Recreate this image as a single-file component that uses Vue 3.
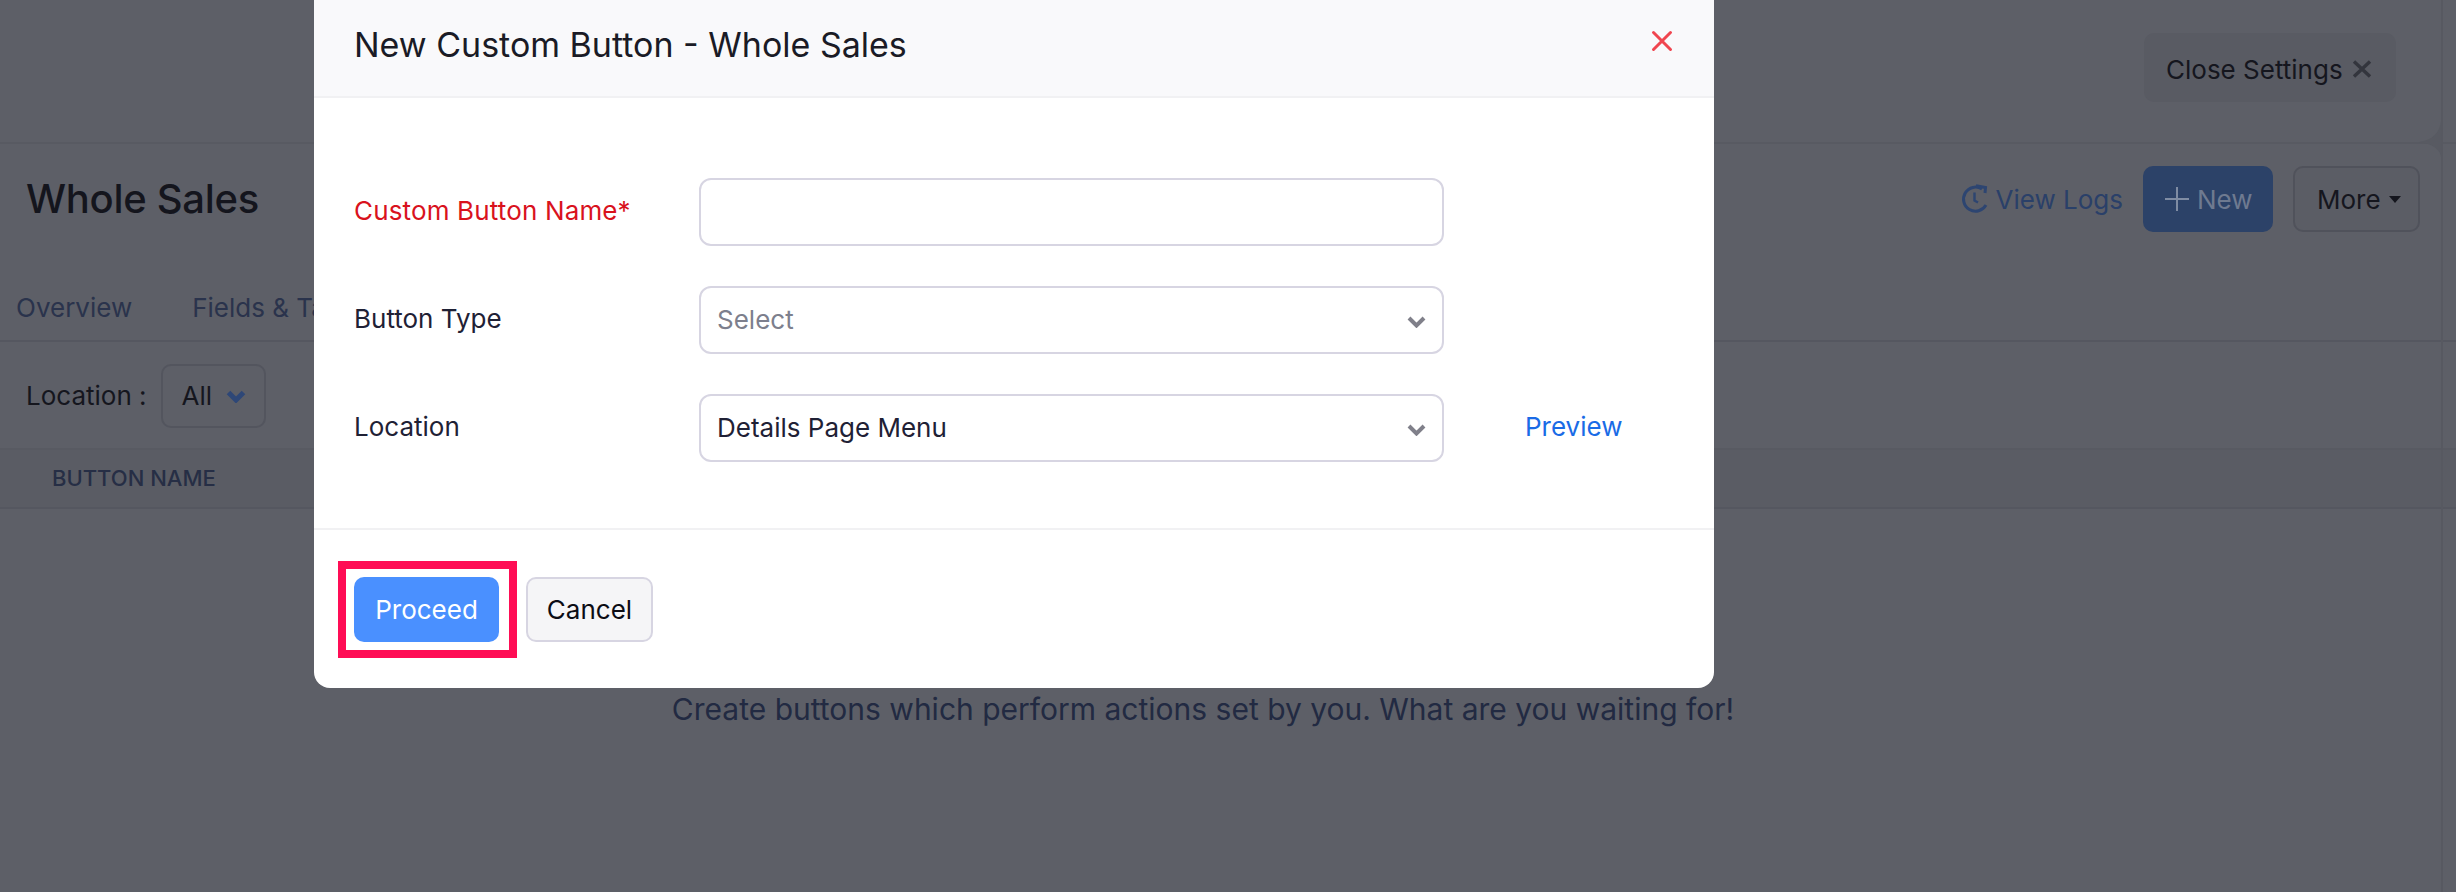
<script setup>
const rows = [
  { label: 'Custom Button Name*', required: true, type: 'input' },
  { label: 'Button Type', type: 'select', value: 'Select', placeholder: true },
  { label: 'Location', type: 'select', value: 'Details Page Menu', preview: true }
]
</script>

<template>
  <div class="page">
    <div class="topbar">
      <div class="close-settings">
        <span>Close Settings</span>
        <svg class="close-settings-x" viewBox="0 0 20 18" width="20" height="18">
          <path d="M2 1.5 18 16.5M18 1.5 2 16.5" />
        </svg>
      </div>
    </div>

    <div class="title-row">
      <h1>Whole Sales</h1>
      <div class="actions">
        <a class="logs">
          <svg viewBox="0 0 28 30" width="28" height="30">
            <path d="M21 5A12 12 0 1 0 25 21" />
            <path d="M15 1.8 24.5 3.5 24 9" />
            <path class="hands" d="M13.5 8.5v8l3.5 2" />
          </svg>
          View Logs
        </a>
        <button class="btn-new">
          <svg viewBox="0 0 24 24" width="24" height="24"><path d="M12 0v24M0 12h24" /></svg>
          New
        </button>
        <button class="btn-more">More<i class="caret"></i></button>
      </div>
    </div>

    <div class="tabs">
      <span>Overview</span>
      <span>Fields &amp; Ta</span>
    </div>

    <div class="filter">
      <span>Location :</span>
      <div class="filter-select">
        All
        <svg viewBox="0 0 20 13" width="20" height="13"><path d="M2.5 2.5 10 10l7.5-7.5" /></svg>
      </div>
    </div>

    <div class="table-head">BUTTON NAME</div>

    <p class="empty">Create buttons which perform actions set by you. What are you waiting for!</p>

    <svg class="corner" viewBox="0 0 22 36" width="22" height="36">
      <path d="M22 0Q20 18 0 21Q20 24 22 36Z" />
    </svg>

    <div class="modal">
      <header class="modal-header">
        <h2>New Custom Button - Whole Sales</h2>
        <svg class="modal-close" viewBox="0 0 24 24" width="24" height="24">
          <path d="M3.5 3.5 20.5 20.5M20.5 3.5 3.5 20.5" />
        </svg>
      </header>

      <div class="modal-body">
        <div v-for="row in rows" :key="row.label" class="form-row">
          <label :class="{ required: row.required }">{{ row.label }}</label>
          <div class="field" :class="{ placeholder: row.placeholder }">
            <span v-if="row.value">{{ row.value }}</span>
            <svg v-if="row.type === 'select'" class="chev" viewBox="0 0 19 12" width="19" height="12">
              <path d="M2 2 9.5 9.5 17 2" />
            </svg>
          </div>
          <a v-if="row.preview" class="preview">Preview</a>
        </div>
      </div>

      <footer class="modal-footer">
        <button class="btn-proceed">Proceed</button>
        <button class="btn-cancel">Cancel</button>
        <div class="highlight"></div>
      </footer>
    </div>
  </div>
</template>

<style>
html, body {
  margin: 0;
  background: #5d5f67;
}
</style>

<style scoped>
.page {
  position: relative;
  width: 2456px;
  height: 892px;
  overflow: hidden;
  background: #5d5f67;
  font-family: Inter, "Liberation Sans", sans-serif;
  font-size: 26px;
  color: #15161e;
}

.page::after {
  content: '';
  position: absolute;
  top: 0;
  bottom: 0;
  left: 2441px;
  width: 2px;
  background: #575961;
}

.corner {
  position: absolute;
  left: 2419px;
  top: 121px;
  fill: #585a62;
}

.topbar {
  height: 144px;
  box-sizing: border-box;
  padding: 33px 60px 0 0;
  display: flex;
  justify-content: flex-end;
  border-bottom: 2px solid #585a62;
}

.close-settings {
  width: 252px;
  height: 69px;
  box-sizing: border-box;
  padding: 3px 0 0 22px;
  display: flex;
  align-items: center;
  gap: 9px;
  background: #595b63;
  border-radius: 10px;
}

.close-settings-x {
  fill: none;
  stroke: #33353d;
  stroke-width: 3.4;
}

.title-row {
  height: 120px;
  box-sizing: border-box;
  padding: 22px 36px 0 26px;
  display: flex;
  justify-content: space-between;
  align-items: flex-start;
}

h1 {
  margin: 9px 0 0;
  font-size: 40px;
  font-weight: 550;
  letter-spacing: -0.3px;
  line-height: 48px;
  color: #14151d;
}

.actions {
  display: flex;
  align-items: center;
  height: 66px;
}

.logs {
  display: flex;
  align-items: center;
  gap: 7px;
  margin-right: 20px;
  color: #2a4069;
}

.logs svg {
  fill: none;
  stroke: #2d4571;
  stroke-width: 3;
}

.logs .hands {
  stroke-width: 2.4;
}

.btn-new,
.btn-more {
  height: 66px;
  box-sizing: border-box;
  font: inherit;
  display: flex;
  align-items: center;
  border-radius: 10px;
}

.btn-new {
  width: 130px;
  padding: 0 0 0 22px;
  gap: 8px;
  margin-right: 20px;
  background: #2c4268;
  border: none;
  color: #6f7a90;
}

.btn-new svg {
  fill: none;
  stroke: #7f8ca3;
  stroke-width: 2;
}

.btn-more {
  width: 127px;
  padding: 0 0 0 22px;
  background: #5b5d65;
  border: 2px solid #50525b;
  color: #15161e;
}

.caret {
  width: 0;
  height: 0;
  margin-left: 8px;
  border-left: 6.5px solid transparent;
  border-right: 6.5px solid transparent;
  border-top: 7px solid #15161e;
}

.tabs {
  height: 78px;
  box-sizing: border-box;
  padding: 10px 0 0 16px;
  display: flex;
  align-items: center;
  gap: 60px;
  border-bottom: 2px solid #555760;
  color: #2a334c;
}

.filter {
  height: 108px;
  box-sizing: border-box;
  padding: 22px 0 0 26px;
  display: flex;
  align-items: flex-start;
  gap: 14px;
  border-bottom: 2px solid #585a62;
  line-height: 64px;
}

.filter-select {
  width: 105px;
  height: 64px;
  box-sizing: border-box;
  padding-left: 19px;
  display: flex;
  align-items: center;
  gap: 14px;
  border: 2px solid #53555e;
  border-radius: 10px;
}

.filter-select svg {
  fill: none;
  stroke: #2e4777;
  stroke-width: 5;
}

.table-head {
  height: 59px;
  box-sizing: border-box;
  padding-left: 52px;
  background: #5a5c64;
  border-bottom: 2px solid #555760;
  font-size: 22px;
  font-weight: 500;
  line-height: 57px;
  color: #262e45;
}

.empty {
  margin: 182px 0 0;
  width: 2406px;
  text-align: center;
  font-size: 30px;
  line-height: 36px;
  color: #222a42;
}

.modal {
  position: absolute;
  top: 0;
  left: 314px;
  width: 1400px;
  background: #fff;
  border-radius: 0 0 16px 16px;
}

.modal-header {
  height: 98px;
  box-sizing: border-box;
  padding: 0 40px 8px 40px;
  display: flex;
  justify-content: space-between;
  align-items: center;
  background: #f9f9fb;
  border-bottom: 2px solid #f1f1f3;
}

h2 {
  margin: 0;
  font-size: 34px;
  font-weight: 400;
  color: #1a1b26;
}

.modal-close {
  margin-bottom: 6px;
  fill: none;
  stroke: #f0454f;
  stroke-width: 3;
  stroke-linecap: round;
}

.modal-body {
  padding: 80px 0 66px 40px;
  display: flex;
  flex-direction: column;
  gap: 40px;
}

.form-row {
  display: grid;
  grid-template-columns: 345px 745px auto;
  align-items: center;
  color: #1f2135;
}

.form-row label {
  padding-bottom: 3px;
}

.required {
  color: #d9121d;
  letter-spacing: 0.15px;
}

.field {
  height: 68px;
  box-sizing: border-box;
  padding: 0 16px 2px 16px;
  display: flex;
  align-items: center;
  justify-content: space-between;
  background: #fff;
  border: 2px solid #d7d5e2;
  border-radius: 12px;
}

.placeholder {
  color: #7d7f8d;
}

.chev {
  margin-left: auto;
  margin-top: 5px;
  fill: none;
  stroke: #80808a;
  stroke-width: 4;
}

.preview {
  margin-left: 81px;
  padding-bottom: 3px;
  color: #1a6be6;
}

.modal-footer {
  position: relative;
  height: 160px;
  box-sizing: border-box;
  padding: 47px 0 0 40px;
  display: flex;
  align-items: flex-start;
  gap: 27px;
  border-top: 2px solid #f1f1f3;
}

.modal-footer button {
  height: 65px;
  box-sizing: border-box;
  font: inherit;
  border-radius: 10px;
}

.btn-proceed {
  width: 145px;
  background: #4a90ff;
  border: none;
  color: #fff;
}

.btn-cancel {
  width: 127px;
  background: #f5f5f7;
  border: 2px solid #d7d5e2;
  color: #0c0c14;
}

.highlight {
  position: absolute;
  left: 24px;
  top: 31px;
  width: 179px;
  height: 97px;
  box-sizing: border-box;
  border: 8px solid #ff0d55;
}
</style>
